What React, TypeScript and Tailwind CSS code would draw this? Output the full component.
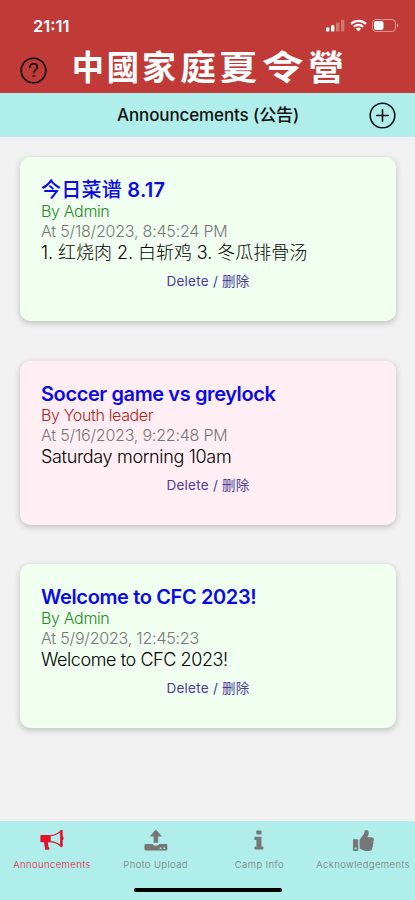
import type { ReactNode } from "react";
import { FaThumbsUp } from "react-icons/fa";

// ─── Types ────────────────────────────────────────────────────

type Announcement = {
  title: ReactNode;
  titleClass: string;
  author: string;
  role: "admin" | "youth";
  date: string;
  body: string;
  bodyClass: string;
};

type Tab = {
  label: string;
  icon: ReactNode;
  active?: boolean;
};

// ─── Data ─────────────────────────────────────────────────────

const ANNOUNCEMENTS: Announcement[] = [
  {
    title: (
      <>
        <span className="font-medium">今日菜谱</span> 8.17
      </>
    ),
    titleClass: "tracking-[0.25px]",
    author: "Admin",
    role: "admin",
    date: "5/18/2023, 8:45:24 PM",
    body: "1. 红烧肉 2. 白斩鸡 3. 冬瓜排骨汤",
    bodyClass: "tracking-[-0.05px]",
  },
  {
    title: "Soccer game vs greylock",
    titleClass: "tracking-[-0.4px]",
    author: "Youth leader",
    role: "youth",
    date: "5/16/2023, 9:22:48 PM",
    body: "Saturday morning 10am",
    bodyClass: "tracking-[-0.32px]",
  },
  {
    title: "Welcome to CFC 2023!",
    titleClass: "tracking-[-0.37px]",
    author: "Admin",
    role: "admin",
    date: "5/9/2023, 12:45:23",
    body: "Welcome to CFC 2023!",
    bodyClass: "tracking-[-0.42px]",
  },
];

const CAMP_NAME = [
  { char: "中", scale: "scale-x-95" },
  { char: "國", scale: "scale-x-95" },
  { char: "家", scale: "scale-x-100" },
  { char: "庭", scale: "scale-x-105" },
  { char: "夏", scale: "scale-x-115" },
  { char: "令", scale: "scale-x-125" },
  { char: "營", scale: "scale-x-105" },
];

// ─── Icons ────────────────────────────────────────────────────

function BullhornIcon() {
  return (
    <svg width="24" height="22" viewBox="0 0 24 22" fill="currentColor">
      <path d="M1.5 6h9.2v7.2H7.9l.5 4.6 1.2 1.3-.7 1.6H5.2L4 13.2H1.5C.8 13.2.4 12.8.4 12V7.2C.4 6.4.8 6 1.5 6z" />
      <path d="M10.5 6.6c4.2-.3 7.7-2.1 10.8-4.7v15.4c-3.1-2.6-6.6-4.3-10.8-4.6" fill="none" stroke="currentColor" strokeWidth="1.2" />
      <path d="M20.2 1.6c0-.8 2.5-1.1 2.5.3v5.6c1.4.7 1.4 2.8 0 3.5v6c0 1.4-2.5 1.2-2.5.3z" />
    </svg>
  );
}

function UploadIcon() {
  return (
    <svg width="24" height="22" viewBox="0 0 24 22" fill="currentColor">
      <path d="M11.9.4 18 7.5h-3.9v6.2H9.7V7.5H5.8z" />
      <path
        fillRule="evenodd"
        d="M1.6 15h6.8c.8 1.2 2 1.7 3.5 1.7s2.7-.5 3.5-1.7h6.8c.7 0 1.1.4 1.1 1.1v4.2c0 .7-.4 1.1-1.1 1.1H1.6c-.7 0-1.1-.4-1.1-1.1v-4.2c0-.7.4-1.1 1.1-1.1zm14.2 3.4v1.5h1.6v-1.5zm3.6 0v1.5H21v-1.5z"
      />
    </svg>
  );
}

function InfoIcon() {
  return (
    <svg width="10" height="20" viewBox="0 0 10 20" fill="currentColor">
      <rect x="2.3" y="0.4" width="5.2" height="4" rx="0.9" />
      <path d="M1.2 6.8h6.3v9.7h1.2c.5 0 .8.3.8.8v1.4c0 .5-.3.8-.8.8H1.2c-.5 0-.8-.3-.8-.8v-1.4c0-.5.3-.8.8-.8h1.2v-6.4H1.2c-.5 0-.8-.3-.8-.8V7.6c0-.5.3-.8.8-.8z" />
    </svg>
  );
}

const TABS: Tab[] = [
  { label: "Announcements", icon: <BullhornIcon />, active: true },
  { label: "Photo Upload", icon: <UploadIcon /> },
  { label: "Camp Info", icon: <InfoIcon /> },
  { label: "Acknowledgements", icon: <FaThumbsUp className="size-[21px]" /> },
];

// ─── Header ───────────────────────────────────────────────────

function StatusBar() {
  return (
    <div className="flex h-[46px] items-start justify-between pt-[15px] pr-[16px] pl-[33px] text-white">
      <span className="text-[16.5px] leading-[22px] font-semibold">21:11</span>
      <div className="flex items-center gap-[5px] pt-[4px]">
        <svg width="20" height="13" viewBox="0 0 20 13" fill="currentColor">
          <rect x="1" y="8.5" width="3.4" height="4" rx="0.8" />
          <rect x="6" y="6.2" width="3.4" height="6.3" rx="0.8" />
          <rect x="11" y="3.4" width="3.4" height="9.1" rx="0.8" opacity="0.3" />
          <rect x="16" y="0.8" width="3.4" height="11.7" rx="0.8" opacity="0.3" />
        </svg>
        <svg width="17" height="13" viewBox="0 0 17 13" fill="none" stroke="currentColor" strokeWidth="2.2">
          <path d="M1 4.9a10.6 10.6 0 0 1 15 0" />
          <path d="M3.9 7.8a6.5 6.5 0 0 1 9.2 0" />
          <path d="M8.5 12.4 5.9 9.8a3.7 3.7 0 0 1 5.2 0z" fill="currentColor" stroke="none" />
        </svg>
        <svg width="27" height="13" viewBox="0 0 27 13">
          <rect x="0.5" y="0.5" width="23" height="12" rx="3.6" fill="none" stroke="currentColor" opacity="0.45" />
          <rect x="2" y="2" width="9.5" height="9" rx="2.2" fill="currentColor" />
          <path d="M25 4.5v4c1.8-.7 1.8-3.3 0-4z" fill="currentColor" opacity="0.5" />
        </svg>
      </div>
    </div>
  );
}

function Header() {
  return (
    <header className="h-[93px] bg-[#c03a37]">
      <StatusBar />
      <div className="flex pl-5">
        <svg className="mt-[11px] shrink-0 text-black" width="27" height="27" viewBox="0 0 27 27" fill="none" stroke="currentColor" strokeWidth="1.6" strokeLinecap="round">
          <circle cx="13.5" cy="13.5" r="12.3" />
          <path d="M9.9 10.2c.1-2.1 1.7-3.4 3.8-3.4s3.7 1.3 3.7 3.2c0 3-3.8 3-3.8 5.8" />
          <circle cx="13.6" cy="19.2" r="1.1" fill="currentColor" stroke="none" />
        </svg>
        <h1 className="ml-6 grid h-10 grid-cols-[34px_35px_38px_39px_42px_47px_40px] justify-items-center font-['Noto_Sans_CJK_TC',sans-serif] text-[34px] leading-[40px] font-bold text-white">
          {CAMP_NAME.map(({ char, scale }) => (
            <span key={char} className={`block ${scale}`}>
              {char}
            </span>
          ))}
        </h1>
      </div>
    </header>
  );
}

function TitleBar() {
  return (
    <div className="flex h-11 items-center justify-end bg-[#afeeeb] pr-[19px]">
      <h2 className="w-[182px] text-[17px] leading-6 font-medium tracking-[-0.12px] whitespace-nowrap text-[#111]">
        Announcements (公告)
      </h2>
      <svg className="ml-[70px] shrink-0 text-[#111]" width="27" height="27" viewBox="0 0 27 27" fill="none" stroke="currentColor" strokeWidth="1.6" strokeLinecap="round">
        <circle cx="13.5" cy="13.5" r="12.3" />
        <path d="M13.5 7.7v11.6M7.7 13.5h11.6" />
      </svg>
    </div>
  );
}

// ─── Cards ────────────────────────────────────────────────────

function AnnouncementCard({ item }: { item: Announcement }) {
  const isAdmin = item.role === "admin";

  return (
    <article
      className={`h-[164px] rounded-[10px] px-[21px] pt-[21px] shadow-[0_2px_6px_rgba(0,0,0,0.22)] ${
        isAdmin ? "bg-[#f0fff0]" : "bg-[#ffeef3]"
      }`}
    >
      <h3 className={`h-[23px] text-[20px] leading-[25px] font-semibold whitespace-nowrap text-[#0b09e8] ${item.titleClass}`}>
        {item.title}
      </h3>
      <p className={`h-5 text-[16px] leading-5 font-light tracking-[-0.35px] ${isAdmin ? "text-[#228b22]" : "text-[#b22222]"}`}>
        By {item.author}
      </p>
      <p className="h-5 text-[16px] leading-5 font-light tracking-[-0.2px] text-[#777]">At {item.date}</p>
      <p className={`h-[22px] text-[18px] leading-[23px] font-light whitespace-nowrap text-black ${item.bodyClass}`}>
        {item.body}
      </p>
      <button className="mx-auto mt-2 block h-5 text-[13.5px] leading-5 tracking-[0.25px] text-[#4b3a9b]">
        Delete / 删除
      </button>
    </article>
  );
}

// ─── Tab bar ──────────────────────────────────────────────────

function TabBar() {
  return (
    <nav className="flex h-[79px] flex-col items-center bg-[#afeeeb]">
      <div className="grid h-[67px] w-full grid-cols-4">
        {TABS.map(({ label, icon, active }) => (
          <div
            key={label}
            className={`flex flex-col items-center pt-[7px] ${active ? "text-[#e5102d]" : "text-[#777]"}`}
          >
            <div className="flex h-6 items-center">{icon}</div>
            <span className="mt-1.5 text-[9.5px] leading-[14px] font-light tracking-[0.4px] whitespace-nowrap">
              {label}
            </span>
          </div>
        ))}
      </div>
      <div className="h-1 w-[148px] rounded-full bg-black" />
    </nav>
  );
}

export default function App() {
  return (
    <div className="flex h-[900px] w-[415px] flex-col overflow-hidden bg-[#f1f1f1] font-['Inter','Noto_Sans_CJK_SC',sans-serif]">
      <Header />
      <TitleBar />
      <main className="flex flex-1 flex-col gap-[39.5px] pt-5 pr-[19px] pl-5">
        {ANNOUNCEMENTS.map((item) => (
          <AnnouncementCard key={item.date} item={item} />
        ))}
      </main>
      <TabBar />
    </div>
  );
}
